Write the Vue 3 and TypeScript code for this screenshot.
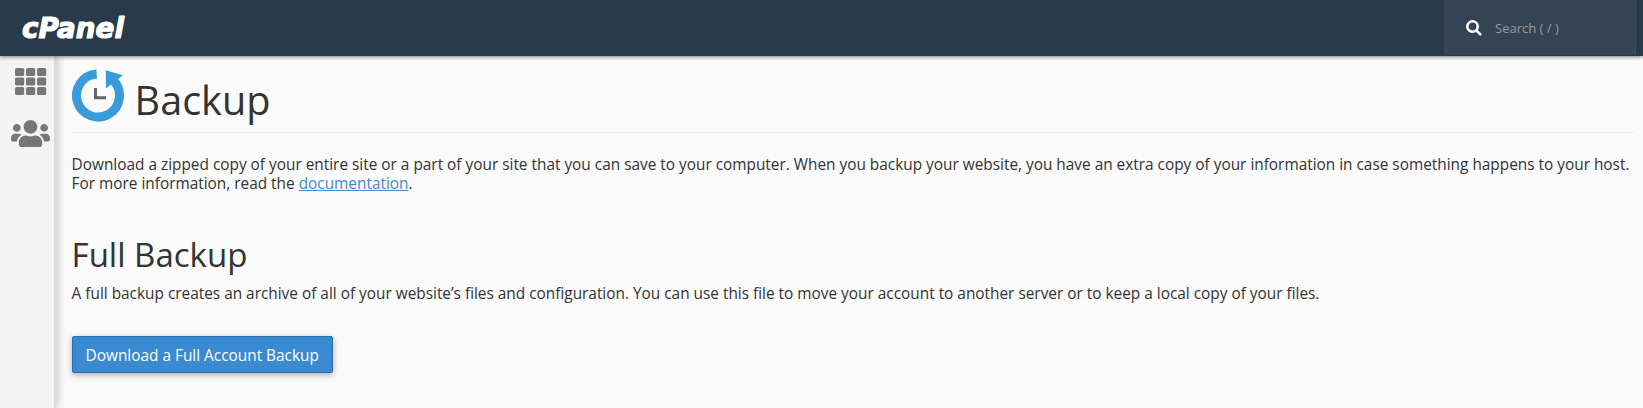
<script setup lang="ts">
const tileColumns: number[] = [0, 11, 22]
const tileRows: number[] = [0, 9.5, 19]
</script>

<template>
  <div class="page">
    <header class="topbar">
      <svg class="logo" width="112" height="40" viewBox="0 0 112 40" role="img" aria-label="cPanel">
        <text x="6" y="30" textLength="102" lengthAdjust="spacingAndGlyphs">cPanel</text>
      </svg>
      <label class="search">
        <svg width="16" height="16" viewBox="0 0 16 16" aria-hidden="true">
          <circle cx="6.5" cy="6.5" r="5.2" />
          <path d="M10.3 10.3 14.3 14.3" />
        </svg>
        <span>Search ( / )</span>
      </label>
    </header>
    <div class="body">
      <nav class="sidebar">
        <svg class="tiles" width="32" height="28" viewBox="0 0 32 28" aria-hidden="true">
          <template v-for="y in tileRows" :key="y">
            <rect v-for="x in tileColumns" :key="x" :x="x" :y="y" width="9.2" height="8" rx="1.6" />
          </template>
        </svg>
        <svg class="users" width="39" height="27.300" viewBox="0 0 640 448" aria-hidden="true">
          <path d="M96 192c35.300 0 64-28.700 64-64s-28.700-64-64-64-64 28.700-64 64 28.700 64 64 64zm448 0c35.300 0 64-28.700 64-64s-28.700-64-64-64-64 28.700-64 64 28.700 64 64 64zm32 32h-64c-17.600 0-33.500 7.100-45.100 18.600 40.300 22.100 68.900 62 75.100 109.400h66c17.700 0 32-14.300 32-32v-32c0-35.300-28.700-64-64-64zm-256 0c61.900 0 112-50.100 112-112S381.900 0 320 0 208 50.100 208 112s50.100 112 112 112zm76.800 32h-8.300c-20.800 10-43.900 16-68.500 16s-47.600-6-68.500-16h-8.300C179.600 256 128 307.600 128 371.200V400c0 26.500 21.500 48 48 48h288c26.500 0 48-21.500 48-48v-28.800c0-63.600-51.600-115.200-115.200-115.200zm-223.700-13.400C161.500 231.100 145.600 224 128 224H64c-35.300 0-64 28.700-64 64v32c0 17.700 14.300 32 32 32h65.900c6.300-47.400 34.900-87.300 75.200-109.400z" />
        </svg>
      </nav>
      <main class="content">
        <h1>
          <svg width="53" height="53" viewBox="0 0 53 53" aria-hidden="true">
            <path class="ring" d="M24.700 5.040A21.500 21.500 0 1 0 41.200 11.300" />
            <path class="arrow" d="M33.900 1.300 50.800 6.300 46 10.200 40 14.700 33.900 19.500Z" />
            <path class="hands" d="M23.500 19V28.700H34" />
          </svg>
          <span>Backup</span>
        </h1>
        <p class="intro">
          Download a zipped copy of your entire site or a part of your site that you can save to your computer. When you backup your website, you have an extra copy of your information in case something happens to your host.<br>For more information, read the <a href="#">documentation</a>.
        </p>
        <h2>Full Backup</h2>
        <p class="detail">A full backup creates an archive of all of your website’s files and configuration. You can use this file to move your account to another server or to keep a local copy of your files.</p>
        <button type="button">Download a Full Account Backup</button>
      </main>
    </div>
  </div>
</template>

<style>
body {
  margin: 0;
  background: #fafafa;
}
</style>

<style scoped>
.page {
  display: flex;
  flex-direction: column;
  height: 408px;
  overflow: hidden;
  color: #333;
  background: #fafafa;
  font: 15.39px/19px "Open Sans", "Noto Sans", sans-serif;
}
.topbar {
  position: relative;
  z-index: 1;
  box-sizing: border-box;
  flex: none;
  display: flex;
  justify-content: space-between;
  height: 56px;
  padding: 0 7px 1px 16px;
  background: #293a4a;
  box-shadow: 0 1px 4px rgba(0, 0, 0, 0.5);
}
.logo {
  margin-top: 8px;
}
.logo text {
  fill: #fff;
  stroke: #fff;
  stroke-width: 1.2px;
  stroke-linejoin: round;
  font: italic bold 29px "DejaVu Sans", sans-serif;
}
.search {
  box-sizing: border-box;
  display: flex;
  align-items: center;
  gap: 13px;
  width: 192px;
  padding-left: 22px;
  border-right: 1px solid #3f4e5c;
  background: #354454;
  color: #969a9c;
  font-size: 13px;
}
.search span {
  padding-top: 2px;
}
.search svg {
  fill: none;
  stroke: #fff;
  stroke-width: 2.6;
  stroke-linecap: round;
}
.body {
  flex: 1;
  display: flex;
}
.sidebar {
  flex: none;
  display: flex;
  flex-direction: column;
  width: 54px;
  background: #f4f4f4;
  border-right: 2px solid #dadada;
  box-shadow: 2px 0 8px rgba(0, 0, 0, 0.2);
  fill: #777;
}
.tiles {
  margin: 12px 0 0 14.500px;
}
.users {
  margin: 24px 0 0 11px;
}
.content {
  flex: 1;
  min-width: 0;
  padding: 0 9px 0 15.600px;
}
h1,
h2 {
  margin: 0;
  font-weight: 400;
}
h1 {
  box-sizing: border-box;
  display: flex;
  gap: 10px;
  height: 77px;
  padding-top: 13px;
  border-bottom: 1px solid #eee;
  font-size: 39.600px;
  line-height: 44px;
}
h1 span {
  margin-top: 9px;
}
.ring {
  fill: none;
  stroke: #389cd9;
  stroke-width: 9;
}
.arrow {
  fill: #389cd9;
}
.hands {
  fill: none;
  stroke: #666;
  stroke-width: 3;
}
p {
  margin: 0;
  white-space: nowrap;
}
.intro {
  margin-top: 22px;
}
a {
  color: #428bca;
  text-decoration: underline;
}
h2 {
  margin-top: 43px;
  font-size: 33px;
  line-height: 38px;
}
.detail {
  margin-top: 10px;
}
button {
  display: block;
  height: 37px;
  margin-top: 33px;
  padding: 1px 13px 0;
  border: 1px solid #2a6fb0;
  border-radius: 2px;
  background: #398ad0;
  color: #fff;
  font: inherit;
  box-shadow: 0 2px 6px rgba(0, 0, 0, 0.3);
}
</style>
